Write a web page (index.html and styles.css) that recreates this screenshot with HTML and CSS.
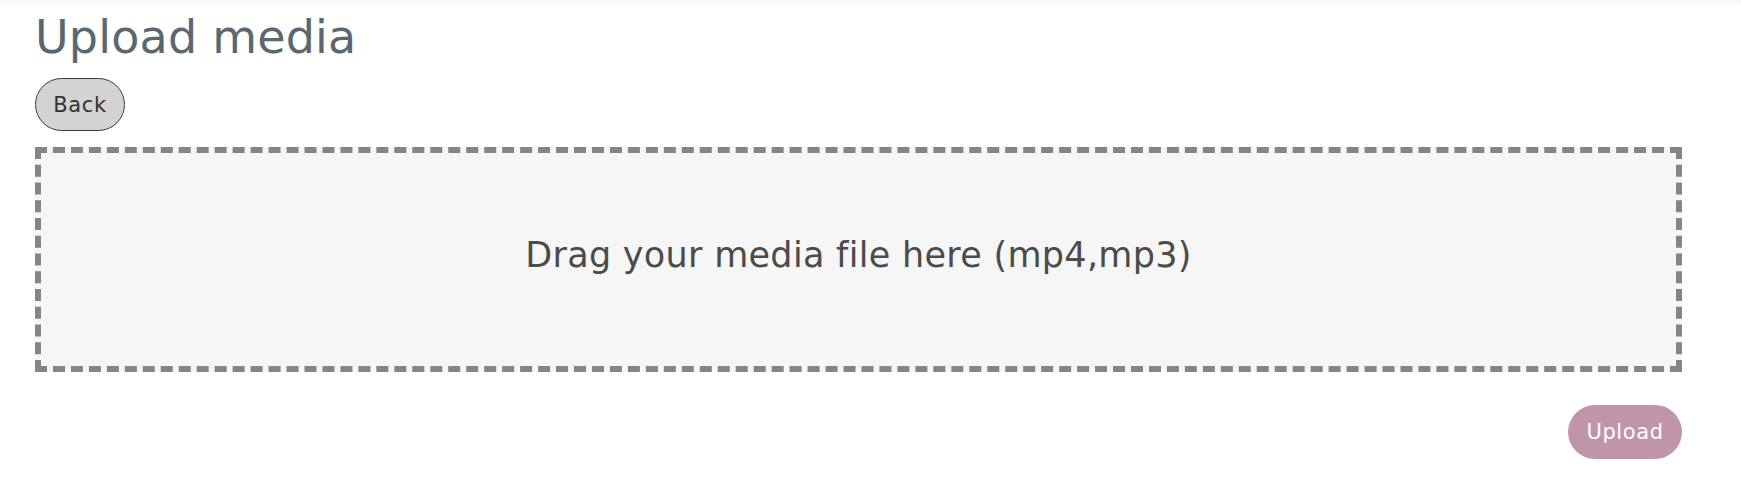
FILE: index.html
```html
<!DOCTYPE html>
<html>
<head>
	<meta charset="UTF-8">
	<title>Upload media</title>
	<link rel="stylesheet" href="styles.css">
</head>
<body>
<div class="topbar"></div>
<div class="page">
	<h1 class="title">Upload media</h1>
	<button class="btn btn-back">Back</button>
	<div class="dropzone">
		<p>Drag your media file here (mp4,mp3)</p>
	</div>
	<div class="actions">
		<button class="btn btn-upload">Upload</button>
	</div>
</div>
</body>
</html>
```

FILE: styles.css
```css
*{margin: 0;padding: 0;box-sizing: border-box;}
body{background: #fff;font-family: "DejaVu Sans", "Open Sans", sans-serif;}

.topbar{height: 6px;background: linear-gradient(#f6f6f6, #fff);}
.page{padding: 0 59px 0 35px;}

.title{margin-top: 4px;font-size: 46px;line-height: 54px;font-weight: 400;color: #5b6770;letter-spacing: 0.2px;}

.btn{display: flex;align-items: center;justify-content: center;font-family: inherit;font-size: 21px;letter-spacing: 0.6px;cursor: pointer;}
.btn-back{margin-top: 14px;width: 90px;height: 53px;border: 1px solid #3a3a3a;border-radius: 27px;background: #d3d3d3;color: #333;}

.dropzone{margin-top: 16px;height: 225px;padding-bottom: 9px;border: 6px dashed #858585;background: #f6f6f6;display: flex;align-items: center;justify-content: center;}
.dropzone p{font-size: 35px;letter-spacing: 0.3px;color: #4b4b4b;}

.actions{display: flex;justify-content: flex-end;margin-top: 33px;}
.btn-upload{width: 114px;height: 54px;border: none;border-radius: 27px;background: #c195a9;color: #fff;}
```
